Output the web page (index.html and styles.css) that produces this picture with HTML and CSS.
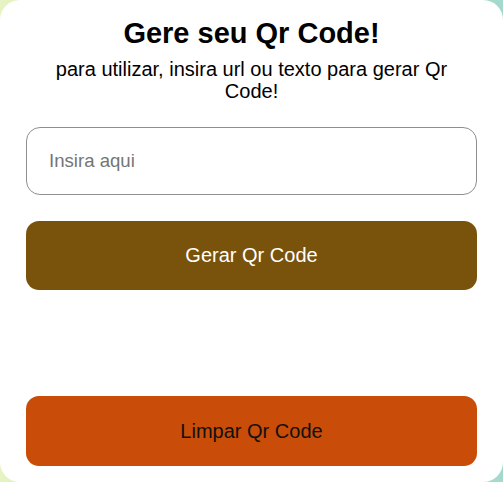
FILE: index.html
```html
<!DOCTYPE html>
<html lang="pt-BR">
<head>
<meta charset="utf-8">
<title>Gere seu Qr Code!</title>
<link rel="stylesheet" href="styles.css">
</head>
<body>
<main class="card">
  <header class="header">
    <h1 class="title">Gere seu Qr Code!</h1>
    <p class="subtitle">para utilizar, insira url ou texto para gerar Qr Code!</p>
  </header>
  <input class="field" type="text" placeholder="Insira aqui">
  <button class="btn btn-generate" type="button">Gerar Qr Code</button>
  <div class="qr-area"></div>
  <button class="btn btn-clear" type="button">Limpar Qr Code</button>
</main>
</body>
</html>
```
FILE: styles.css
```css
html, body {
  margin: 0;
  height: 100%;
}
body {
  background: linear-gradient(to right, #e6f3c2, #a4d9cd);
  font-family: "Liberation Sans", Arial, sans-serif;
  overflow: hidden;
}
.card {
  box-sizing: border-box;
  height: 482px;
  background: #fff;
  border-radius: 20px;
  padding: 17px 26px 16px;
  display: flex;
  flex-direction: column;
}
.header {
  text-align: center;
  color: #000;
}
.title {
  margin: 0;
  font-size: 29px;
  line-height: 33px;
  font-weight: bold;
}
.subtitle {
  margin: 8px 10px 0;
  font-size: 20px;
  line-height: 22px;
}
.field {
  box-sizing: border-box;
  margin-top: 25px;
  height: 68px;
  width: 100%;
  border: 1px solid #8f8f8f;
  border-radius: 14px;
  padding: 0 22px;
  font-family: inherit;
  font-size: 18.6px;
  color: #000;
  outline: none;
}
.field::placeholder {
  color: #757575;
}
.btn {
  box-sizing: border-box;
  width: 100%;
  height: 69px;
  border: none;
  border-radius: 13px;
  font-family: inherit;
  font-size: 20px;
  cursor: pointer;
}
.btn-generate {
  margin-top: 26px;
  background: #79520c;
  color: #fff;
}
.qr-area {
  flex: 1;
}
.btn-clear {
  background: #c94c08;
  color: #111;
  height: 70px;
}
```
